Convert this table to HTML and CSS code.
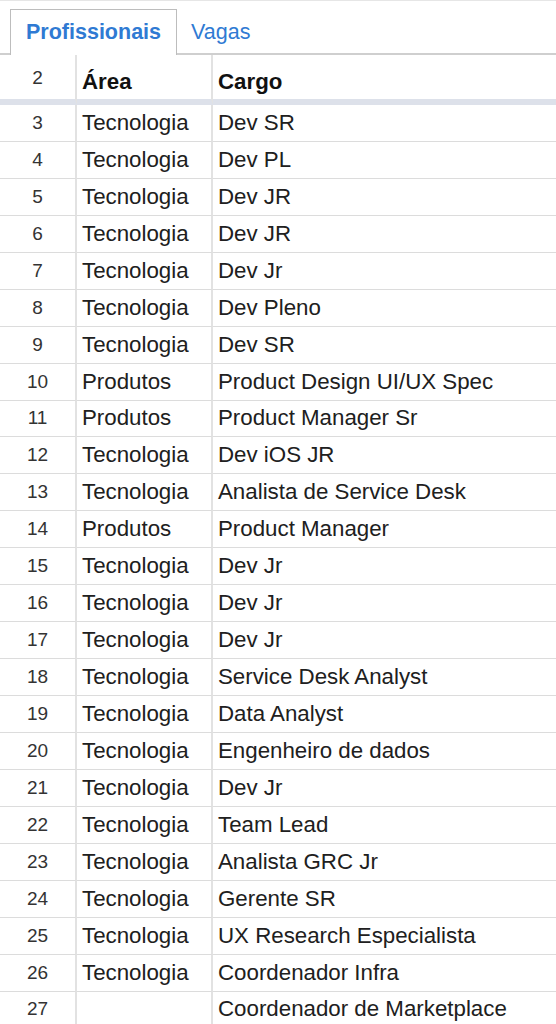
FILE: index.html
```html
<!DOCTYPE html>
<html lang="pt">
<head>
<meta charset="utf-8">
<title>Profissionais</title>
<link rel="stylesheet" href="styles.css">
</head>
<body>
<div class="topline"></div>
<div class="tabs">
  <div class="tab active">Profissionais</div>
  <div class="tab">Vagas</div>
</div>
<table class="sheet">
  <colgroup><col class="c-num"><col class="c-area"><col class="c-cargo"></colgroup>
  <thead>
    <tr class="head"><td class="num">2</td><th>Área</th><th>Cargo</th></tr>
  </thead>
  <tbody>
    <tr><td class="num">3</td><td>Tecnologia</td><td>Dev SR</td></tr>
    <tr><td class="num">4</td><td>Tecnologia</td><td>Dev PL</td></tr>
    <tr><td class="num">5</td><td>Tecnologia</td><td>Dev JR</td></tr>
    <tr><td class="num">6</td><td>Tecnologia</td><td>Dev JR</td></tr>
    <tr><td class="num">7</td><td>Tecnologia</td><td>Dev Jr</td></tr>
    <tr><td class="num">8</td><td>Tecnologia</td><td>Dev Pleno</td></tr>
    <tr><td class="num">9</td><td>Tecnologia</td><td>Dev SR</td></tr>
    <tr><td class="num">10</td><td>Produtos</td><td>Product Design UI/UX Spec</td></tr>
    <tr><td class="num">11</td><td>Produtos</td><td>Product Manager Sr</td></tr>
    <tr><td class="num">12</td><td>Tecnologia</td><td>Dev iOS JR</td></tr>
    <tr><td class="num">13</td><td>Tecnologia</td><td>Analista de Service Desk</td></tr>
    <tr><td class="num">14</td><td>Produtos</td><td>Product Manager</td></tr>
    <tr><td class="num">15</td><td>Tecnologia</td><td>Dev Jr</td></tr>
    <tr><td class="num">16</td><td>Tecnologia</td><td>Dev Jr</td></tr>
    <tr><td class="num">17</td><td>Tecnologia</td><td>Dev Jr</td></tr>
    <tr><td class="num">18</td><td>Tecnologia</td><td>Service Desk Analyst</td></tr>
    <tr><td class="num">19</td><td>Tecnologia</td><td>Data Analyst</td></tr>
    <tr><td class="num">20</td><td>Tecnologia</td><td>Engenheiro de dados</td></tr>
    <tr><td class="num">21</td><td>Tecnologia</td><td>Dev Jr</td></tr>
    <tr><td class="num">22</td><td>Tecnologia</td><td>Team Lead</td></tr>
    <tr><td class="num">23</td><td>Tecnologia</td><td>Analista GRC Jr</td></tr>
    <tr><td class="num">24</td><td>Tecnologia</td><td>Gerente SR</td></tr>
    <tr><td class="num">25</td><td>Tecnologia</td><td>UX Research Especialista</td></tr>
    <tr><td class="num">26</td><td>Tecnologia</td><td>Coordenador Infra</td></tr>
    <tr><td class="num">27</td><td></td><td>Coordenador de Marketplace</td></tr>
  </tbody>
</table>
</body>
</html>
```
FILE: styles.css
```css
html, body {
  margin: 0;
  padding: 0;
  background: #fff;
  font-family: "Liberation Sans", Arial, sans-serif;
  color: #202020;
  overflow: hidden;
}
.topline {
  height: 1px;
  background: #e6e6e6;
}
.tabs {
  display: flex;
  height: 54px;
  box-sizing: border-box;
  padding: 8px 0 0 10px;
  border-bottom: 2px solid #cfcfcf;
}
.tab {
  font-size: 21.5px;
  line-height: 46px;
  color: #2f7ad3;
  padding: 0 14px;
}
.tab.active {
  font-weight: bold;
  padding: 0 15px;
  border: 1.5px solid #bdbdbd;
  border-bottom: none;
  margin-bottom: -2px;
  background: #fff;
  height: 46px;
  box-sizing: border-box;
  line-height: 45px;
}
.sheet {
  width: 100%;
  border-collapse: separate;
  border-spacing: 0;
  table-layout: fixed;
}
.c-num { width: 77px; }
.c-area { width: 136px; }
.sheet td, .sheet th {
  font-size: 22.3px;
  text-align: left;
  padding: 0 0 0 5px;
  height: 36.95px;
  border-bottom: 1px solid #dcdcdc;
  border-right: 2px solid #e2e2e2;
  white-space: nowrap;
  overflow: hidden;
  box-sizing: border-box;
  vertical-align: middle;
}
.sheet td:last-child, .sheet th:last-child { border-right: none; }
.sheet td.num {
  text-align: center;
  padding: 0;
  font-size: 19px;
  color: #333;
}
.sheet .head td, .sheet .head th {
  height: 50px;
  border-bottom: 6px solid #dde1ea;
}
.sheet .head th { font-weight: bold; color: #111; padding-top: 9px; }
.sheet .head td.num { padding-top: 1px; }
```
